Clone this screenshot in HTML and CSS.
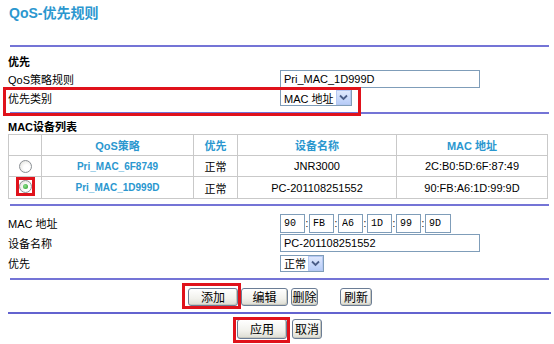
FILE: index.html
```html
<!DOCTYPE html>
<html>
<head>
<meta charset="utf-8">
<title>QoS-优先规则</title>
<link rel="stylesheet" href="styles.css">
</head>
<body>
<div class="page">
  <div class="title">QoS-优先规则</div>
  <div class="rule r1"></div>

  <div class="sec-head">优先</div>
  <div class="row">
    <span class="lbl">QoS策略规则</span>
    <span class="field"><input class="text-input" type="text" value="Pri_MAC_1D999D"></span>
  </div>
  <div class="row mark-row">
    <span class="lbl">优先类别</span>
    <span class="field">
      <span class="select sel-mac"><span class="sel-text">MAC 地址</span><span class="sel-btn"><svg width="9" height="7" viewBox="0 0 9 7"><path d="M1 1.5 L4.5 5 L8 1.5" fill="none" stroke="#4a5d88" stroke-width="1.8"/></svg></span></span>
    </span>
  </div>
  <div class="rule r2"></div>

  <div class="sec-head sec-mac">MAC设备列表</div>
  <table class="devices">
    <colgroup>
      <col class="c-radio"><col class="c-qos"><col class="c-pri"><col class="c-name"><col class="c-mac">
    </colgroup>
    <thead>
      <tr class="head-row">
        <th></th><th>QoS策略</th><th>优先</th><th>设备名称</th><th>MAC 地址</th>
      </tr>
    </thead>
    <tbody>
      <tr class="r-a">
        <td><span class="radio"></span></td>
        <td class="link">Pri_MAC_6F8749</td>
        <td>正常</td>
        <td>JNR3000</td>
        <td>2C:B0:5D:6F:87:49</td>
      </tr>
      <tr class="r-b">
        <td><span class="mark mark-radio"><span class="radio on"></span></span></td>
        <td class="link">Pri_MAC_1D999D</td>
        <td>正常</td>
        <td>PC-201108251552</td>
        <td>90:FB:A6:1D:99:9D</td>
      </tr>
    </tbody>
  </table>
  <div class="rule r3"></div>

  <div class="form">
    <div class="row frow">
      <span class="lbl">MAC 地址</span>
      <span class="field mac-field">
        <input class="mac-in" type="text" value="90"><span class="colon">:</span>
        <input class="mac-in" type="text" value="FB"><span class="colon">:</span>
        <input class="mac-in" type="text" value="A6"><span class="colon">:</span>
        <input class="mac-in" type="text" value="1D"><span class="colon">:</span>
        <input class="mac-in" type="text" value="99"><span class="colon">:</span>
        <input class="mac-in mac-last" type="text" value="9D">
      </span>
    </div>
    <div class="row frow">
      <span class="lbl">设备名称</span>
      <span class="field"><input class="text-input" type="text" value="PC-201108251552"></span>
    </div>
    <div class="row frow">
      <span class="lbl">优先</span>
      <span class="field">
        <span class="select sel-pri"><span class="sel-text">正常</span><span class="sel-btn"><svg width="9" height="7" viewBox="0 0 9 7"><path d="M1 1.5 L4.5 5 L8 1.5" fill="none" stroke="#4a5d88" stroke-width="1.8"/></svg></span></span>
      </span>
    </div>
  </div>
  <div class="rule r4"></div>

  <div class="btn-row top-btns">
    <span class="mark mark-add"><button class="btn b-add">添加</button></span>
    <button class="btn b-edit">编辑</button>
    <button class="btn b-del">删除</button>
    <button class="btn b-refresh">刷新</button>
  </div>
  <div class="rule r5"></div>

  <div class="btn-row bottom-btns">
    <span class="mark mark-apply"><button class="btn b-apply">应用</button></span>
    <button class="btn b-cancel">取消</button>
  </div>
</div>
</body>
</html>
```

FILE: styles.css
```css
* { box-sizing: border-box; }

body {
  margin: 0;
  background: #ffffff;
  font-family: "Liberation Sans", "Noto Sans CJK SC", sans-serif;
  font-size: 11px;
  color: #000;
}

.page {
  width: 554px;
  height: 344px;
  overflow: hidden;
}

.title {
  height: 27px;
  line-height: 27px;
  padding-left: 9px;
  font-size: 14px;
  font-weight: bold;
  color: #2b97cf;
}

.rule {
  height: 2px;
  background: #7474d6;
  margin: 0 5px 0 10px;
}
.r1 { margin-top: 18px; }
.r2 { margin-top: 5px; }
.r3 { margin-top: 5px; }
.r4 { margin-top: 5px; }
.r5 { margin-top: 6px; margin-left: 8px; margin-right: 3px; background: #6363cf; }

.sec-head {
  height: 14px;
  line-height: 14px;
  margin-top: 8px;
  padding-left: 8px;
  font-weight: bold;
}
.sec-mac { margin-top: 6px; }

.row {
  display: grid;
  grid-template-columns: 272px auto;
  align-items: center;
  height: 19px;
  padding-left: 8px;
  position: relative;
}

.lbl { white-space: nowrap; }

.field {
  display: flex;
  align-items: center;
}

.text-input {
  width: 200px;
  height: 18px;
  border: 1px solid #7f9db9;
  padding: 0 3px;
  margin: 0;
  font: 11px "Liberation Sans", "Noto Sans CJK SC", sans-serif;
  color: #000;
  background: #fff;
  outline: none;
}

.select {
  display: inline-flex;
  align-items: center;
  height: 17px;
  border: 1px solid #7f9db9;
  background: #fff;
  padding: 0 0 0 3px;
}
.sel-mac { width: 72px; }
.sel-pri { width: 44px; }
.sel-text {
  flex: 1;
  white-space: nowrap;
  font-size: 11px;
}
.sel-btn {
  width: 15px;
  height: 15px;
  background: linear-gradient(#dfe8fd, #b8cdf8);
  border: 1px solid #b5c8f2;
  display: flex;
  align-items: center;
  justify-content: center;
}

/* red annotation boxes */
.mark-row::after {
  content: "";
  position: absolute;
  left: 3px;
  top: -1px;
  width: 352px;
  height: 23px;
  border: 3px solid #e0121b;
  pointer-events: none;
}
.mark {
  position: relative;
  display: inline-flex;
}
.mark::after {
  content: "";
  position: absolute;
  border: 3px solid #e0121b;
  pointer-events: none;
}
.mark-radio::after { left: -3px; right: -3px; top: -3px; bottom: -3px; }
.mark-add::after { left: -6px; right: -3px; top: -5px; bottom: -3px; }
.mark-apply::after { left: -4px; right: -3px; top: -2px; bottom: -4px; }

/* table */
.devices {
  margin-left: 8px;
  width: 539px;
  border-collapse: collapse;
  table-layout: fixed;
  border: 1px solid #c9c9c9;
}
.c-radio { width: 33px; }
.c-qos { width: 152px; }
.c-pri { width: 44px; }
.c-name { width: 159px; }
.c-mac { width: 151px; }

.devices th,
.devices td {
  border: 1px solid #c9c9c9;
  padding: 0;
  text-align: center;
  vertical-align: middle;
  font-size: 11px;
  white-space: nowrap;
}
.devices th {
  color: #2b97cf;
  font-weight: bold;
}
.head-row { height: 21px; }
.r-a { height: 21px; }
.r-b { height: 22px; }
.devices td.link {
  color: #2b97cf;
  font-weight: bold;
  font-size: 10px;
}

.radio {
  display: inline-block;
  width: 13px;
  height: 13px;
  border-radius: 50%;
  border: 1px solid #8c9196;
  background: radial-gradient(circle at 60% 60%, #ffffff 30%, #dcdcd6 100%);
  vertical-align: middle;
  position: relative;
}
.radio.on::after {
  content: "";
  position: absolute;
  left: 3px;
  top: 3px;
  width: 5px;
  height: 5px;
  border-radius: 50%;
  background: radial-gradient(circle at 40% 40%, #8fe08f, #219a21);
}

/* lower form */
.form { margin-top: 7px; }
.frow { height: 20px; }
.mac-field { gap: 0; }
.mac-in {
  width: 25px;
  height: 19px;
  border: 1px solid #7f9db9;
  padding: 0 0 0 3px;
  margin: 0;
  font: 10px "Liberation Mono", monospace;
  color: #000;
  background: #fff;
  outline: none;
}
.mac-last { width: 26px; }
.colon {
  width: 4px;
  text-align: center;
  font-size: 10px;
  line-height: 19px;
}

/* buttons */
.btn-row {
  display: flex;
  justify-content: center;
  align-items: center;
}
.top-btns {
  margin-top: 8px;
  padding-left: 6px;
  gap: 3px;
}
.bottom-btns {
  margin-top: 5px;
  padding-left: 5px;
  gap: 5px;
}
.btn {
  height: 18px;
  padding: 0;
  margin: 0;
  border: 1px solid #6b7d95;
  border-radius: 3px;
  background: linear-gradient(#ffffff 0%, #f1f1ec 60%, #dcdcd2 100%);
  box-shadow: inset -1px -1px 0 #c8c8be;
  font: 12px "Noto Sans CJK SC", "Liberation Sans", sans-serif;
  color: #000;
  line-height: 16px;
}
.b-add { width: 50px; }
.b-edit { width: 47px; }
.b-del { width: 27px; }
.b-refresh { width: 32px; margin-left: 19px; }
.b-apply { width: 50px; height: 20px; }
.b-cancel { width: 30px; height: 20px; }
```
